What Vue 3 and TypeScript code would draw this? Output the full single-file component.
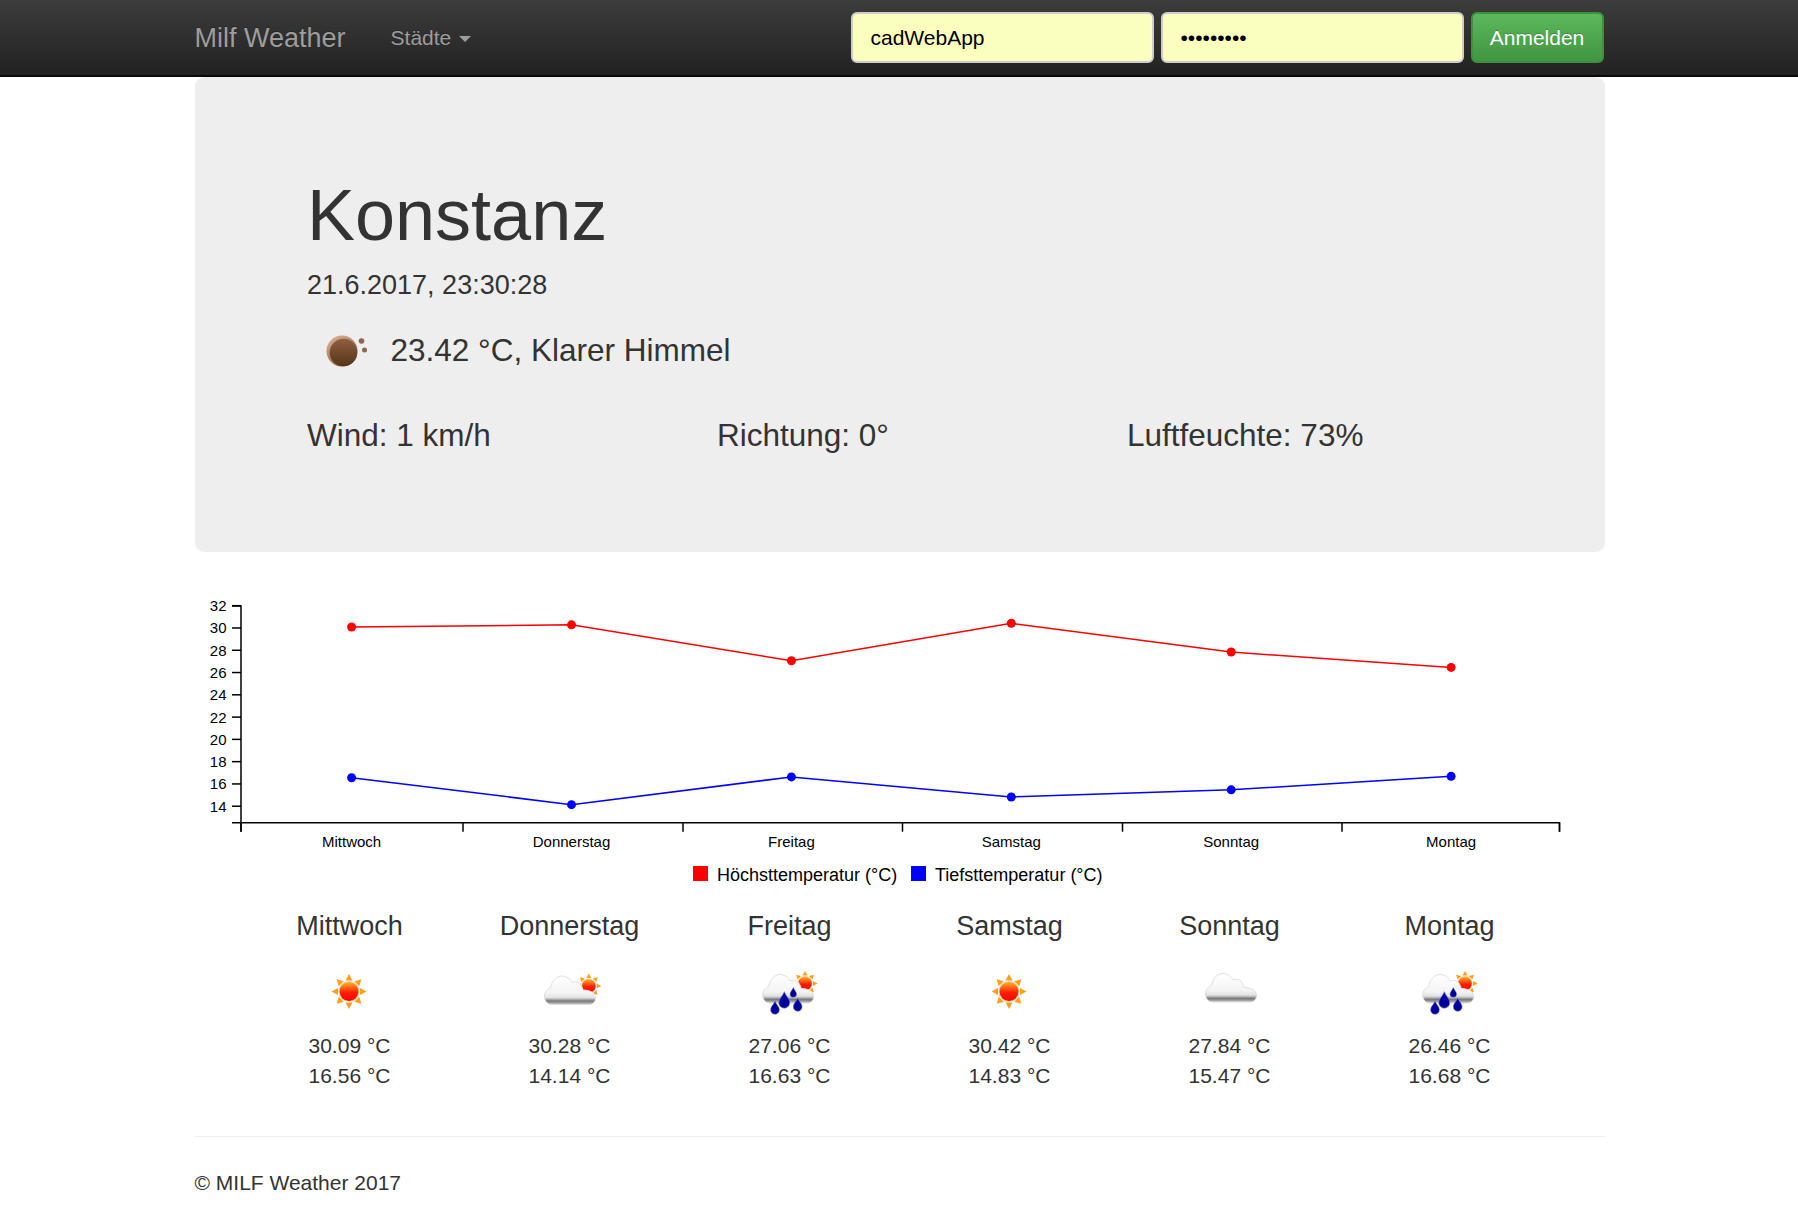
<template>
  <nav class="navbar">
    <div class="nav-inner">
      <a class="brand">Milf Weather</a>
      <a class="cities">Städte <span class="caret"></span></a>
      <form class="login" @submit.prevent>
        <input class="field" type="text" value="cadWebApp" />
        <input class="field" type="password" value="cadWebApp" />
        <button class="btn-login" type="submit">Anmelden</button>
      </form>
    </div>
  </nav>

  <main class="container">
    <section class="jumbotron">
      <h1>Konstanz</h1>
      <div class="date">21.6.2017, 23:30:28</div>
      <p class="current">
        <svg class="icon" viewBox="0 0 75 75" width="75" height="75">
          <g filter="url(#soft)">
            <circle cx="35" cy="38" r="15.5" fill="url(#moonRim)" />
            <circle cx="36.5" cy="39.5" r="13.8" fill="url(#moonBody)" />
            <circle cx="54.5" cy="28" r="2.8" fill="#8d6650" />
            <circle cx="57.5" cy="37" r="2.5" fill="#8d6650" />
          </g>
        </svg>
        <span>23.42 °C, Klarer Himmel</span>
      </p>
      <div class="stats">
        <div>Wind: 1 km/h</div>
        <div>Richtung: 0°</div>
        <div>Luftfeuchte: 73%</div>
      </div>
    </section>

    <svg class="chart" viewBox="0 0 1410 290" width="1410" height="290">
      <defs>
        <filter id="soft" x="-10%" y="-10%" width="120%" height="120%">
          <feGaussianBlur stdDeviation="0.55" />
        </filter>
        <linearGradient id="moonRim" x1="0" y1="0" x2="0.6" y2="1">
          <stop offset="0" stop-color="#e2b79c" />
          <stop offset="1" stop-color="#8a5c3e" />
        </linearGradient>
        <linearGradient id="moonBody" x1="0" y1="0" x2="0" y2="1">
          <stop offset="0" stop-color="#8f6040" />
          <stop offset="1" stop-color="#553419" />
        </linearGradient>
        <linearGradient id="sunBody" x1="0" y1="0" x2="0" y2="1">
          <stop offset="0" stop-color="#ffb030" />
          <stop offset="0.55" stop-color="#ff2000" />
          <stop offset="1" stop-color="#ff0000" />
        </linearGradient>
        <linearGradient id="cloudBody" x1="0" y1="0" x2="0" y2="1">
          <stop offset="0" stop-color="#ffffff" />
          <stop offset="0.6" stop-color="#f4f4f4" />
          <stop offset="0.76" stop-color="#e2e2e2" />
          <stop offset="0.88" stop-color="#787878" />
          <stop offset="1" stop-color="#c8c8c8" />
        </linearGradient>
        <symbol id="cloud" overflow="visible">
          <path
            d="M7 28.5C2.5 28.5 0 24.5 0 20.5 0 16 3 13 6 12 7 5 12 0 17.5 0 22 0 26 3 27.5 6.5 30 5 35 5.5 37 10 38 12 38.5 13.5 38.5 14 44 14 51 16 51 22 51 26 48 28.5 45 28.5Z"
            fill="url(#cloudBody)"
            stroke="#dedede"
            stroke-width="1"
          />
        </symbol>
        <symbol id="sun" overflow="visible">
          <g fill="#ff9f1f">
            <polygon
              v-for="angle in rays"
              :key="angle"
              points="-3.5,-11 3.5,-11 0,-17.5"
              :transform="`rotate(${angle})`"
            />
          </g>
          <circle r="10.5" fill="#ffd28a" />
          <circle r="9.4" fill="url(#sunBody)" />
        </symbol>
        <symbol id="smallSun" overflow="visible">
          <g fill="#ff9f1f">
            <polygon
              v-for="angle in rays"
              :key="angle"
              points="-2.5,-8 2.5,-8 0,-12.5"
              :transform="`rotate(${angle})`"
            />
          </g>
          <circle r="7.6" fill="#ffd28a" />
          <circle r="6.8" fill="url(#sunBody)" />
        </symbol>
        <path
          id="drop"
          d="M0 -1.7C.3 -.9 1 -.4 1 .3A1 1 0 1 1 -1 .3C-1 -.4 -.3 -.9 0 -1.7Z"
          fill="#00009c"
          stroke="#7f7fd0"
          stroke-width=".12"
        />
      </defs>

      <g class="axis">
        <path d="M37 9H46V225.7H37" />
        <path d="M46 234.7V225.7H1364.5V234.7" />
        <line v-for="tick in yTicks" :key="tick" x1="37" x2="46" :y1="yAt(tick)" :y2="yAt(tick)" />
        <line v-for="x in xTicks" :key="x" :x1="x" :x2="x" y1="225.7" y2="234.7" />
      </g>
      <text v-for="tick in yTicks" :key="tick" class="tick" x="31.5" :y="yAt(tick) + 5.5" text-anchor="end">{{ tick }}</text>
      <text v-for="(day, i) in days" :key="day.name" class="tick" :x="xAt(i)" y="250" text-anchor="middle">{{ day.name }}</text>

      <polyline class="series" stroke="#f00" :points="linePoints('high')" />
      <polyline class="series" stroke="#00f" :points="linePoints('low')" />
      <circle v-for="(day, i) in days" :key="day.name" :cx="xAt(i)" :cy="yAt(day.high)" r="4.5" fill="#f00" />
      <circle v-for="(day, i) in days" :key="day.name" :cx="xAt(i)" :cy="yAt(day.low)" r="4.5" fill="#00f" />

      <rect x="498" y="269" width="15" height="15" fill="#f00" />
      <text class="legend" x="522" y="284">Höchsttemperatur (°C)</text>
      <rect x="716" y="269" width="15" height="15" fill="#00f" />
      <text class="legend" x="740" y="284">Tiefsttemperatur (°C)</text>
    </svg>

    <section class="forecast">
      <div v-for="day in days" :key="day.name" class="day">
        <h4>{{ day.name }}</h4>
        <svg class="icon day-icon" viewBox="0 0 75 75" width="75" height="75">
          <g filter="url(#soft)">
            <use v-if="day.icon === 'sun'" href="#sun" x="37" y="37.5" />
            <template v-if="day.icon === 'cloudSun'">
              <use href="#smallSun" x="56.8" y="32" />
              <use href="#cloud" x="12.5" y="22" />
            </template>
            <use v-if="day.icon === 'cloud'" href="#cloud" x="13.5" y="19.5" />
            <template v-if="day.icon === 'rain'">
              <use href="#smallSun" x="53" y="29.5" />
              <use href="#cloud" x="10.7" y="20.5" />
              <use href="#drop" transform="translate(32.3 47) scale(5.5)" />
              <use href="#drop" transform="translate(23 54.5) scale(4.4)" />
              <use href="#drop" transform="translate(45.7 51.5) scale(4.4)" />
              <use href="#drop" transform="translate(41.3 39) scale(3.3)" />
            </template>
          </g>
        </svg>
        <div class="temps">
          <div>{{ day.high.toFixed(2) }} °C</div>
          <div>{{ day.low.toFixed(2) }} °C</div>
        </div>
      </div>
    </section>

    <hr />
    <footer>© MILF Weather 2017</footer>
  </main>
</template>

<script setup lang="ts">
type Day = {
  name: string,
  high: number,
  low: number,
  icon: "sun" | "cloudSun" | "cloud" | "rain"
};

const days: Day[] = [
  { name: "Mittwoch", high: 30.09, low: 16.56, icon: "sun" },
  { name: "Donnerstag", high: 30.28, low: 14.14, icon: "cloudSun" },
  { name: "Freitag", high: 27.06, low: 16.63, icon: "rain" },
  { name: "Samstag", high: 30.42, low: 14.83, icon: "sun" },
  { name: "Sonntag", high: 27.84, low: 15.47, icon: "cloud" },
  { name: "Montag", high: 26.46, low: 16.68, icon: "rain" }
];

const yTicks = [14, 16, 18, 20, 22, 24, 26, 28, 30, 32];
const xTicks = [46, 268, 488, 707.5, 927.5, 1147, 1364.5];
const rays = [0, 45, 90, 135, 180, 225, 270, 315];

function xAt(i: number) {
  return 156.6 + i * 219.9;
}

function yAt(value: number) {
  return 180.7 - (value - 16.56) * 11.14;
}

function linePoints(key: "high" | "low") {
  return days.map((day, i) => `${xAt(i)},${yAt(day[key])}`).join(" ");
}
</script>

<style>
body {
  background: #fff;
}
</style>

<style scoped>
.navbar {
  height: 75px;
  background: linear-gradient(to bottom, #3c3c3c, #222);
  border-bottom: 2px solid #080808;
  font-family: "Liberation Sans", Arial, sans-serif;
}

.nav-inner {
  width: 1410px;
  height: 75px;
  margin-left: 194.5px;
  display: flex;
  align-items: center;
}

.brand {
  padding-top: 2px;
  font-size: 27px;
  color: #9d9d9d;
  text-shadow: 0 -1px 0 rgba(0, 0, 0, .25);
}

.cities {
  margin-left: 45px;
  font-size: 21px;
  color: #9d9d9d;
  text-shadow: 0 -1px 0 rgba(0, 0, 0, .25);
}

.caret {
  display: inline-block;
  margin-left: 2px;
  vertical-align: middle;
  border-top: 6px solid #9d9d9d;
  border-left: 6px solid transparent;
  border-right: 6px solid transparent;
}

.login {
  margin-left: auto;
  display: flex;
  gap: 6.5px;
  margin-right: 1px;
}

.field {
  box-sizing: border-box;
  width: 303.5px;
  height: 51px;
  padding: 0 18px;
  background: #faffbd;
  border: 2px solid #ccc;
  border-radius: 6px;
  font-family: inherit;
  font-size: 21px;
  color: #000;
  outline: none;
}

.btn-login {
  box-sizing: border-box;
  width: 133px;
  height: 51px;
  padding: 0;
  background: linear-gradient(to bottom, #5cb85c, #419641);
  border: 2px solid #3e8f3e;
  border-radius: 6px;
  font-family: inherit;
  font-size: 21px;
  color: #fff;
  text-shadow: 0 -1px 0 rgba(0, 0, 0, .2);
}

.container {
  width: 1410px;
  margin-left: 194.5px;
  color: #333;
  font-family: "Liberation Sans", Arial, sans-serif;
  font-size: 21px;
  line-height: 30px;
}

.jumbotron {
  box-sizing: border-box;
  height: 475px;
  padding: 99px 67.5px 0 112.5px;
  background: #eee;
  border-radius: 9px;
}

h1 {
  margin: 0;
  font-size: 72px;
  font-weight: 400;
  line-height: 79px;
}

.date {
  margin-top: 12px;
  font-size: 27px;
  line-height: 36px;
}

.current {
  display: flex;
  align-items: center;
  margin: 10px 0 0;
  font-size: 31.5px;
  line-height: 45px;
}

.current span {
  margin-left: 8.5px;
}

.icon {
  display: block;
}

.stats {
  display: grid;
  grid-template-columns: repeat(3, 410px);
  margin-top: 24.5px;
  font-size: 31.5px;
  line-height: 45px;
}

.chart {
  display: block;
  margin-top: 45px;
}

.axis path,
.axis line {
  fill: none;
  stroke: #000;
  stroke-width: 1.5;
}

.tick {
  font-size: 15px;
  fill: #000;
}

.legend {
  font-size: 18px;
  fill: #000;
}

.series {
  fill: none;
  stroke-width: 1.5;
}

.forecast {
  display: grid;
  grid-template-columns: repeat(6, 220px);
  padding: 0 45px;
  text-align: center;
}

h4 {
  margin: 24px 0 0;
  font-size: 27px;
  font-weight: 400;
  line-height: 30px;
}

.day-icon {
  margin: 13px auto 0;
}

.temps {
  margin-top: 1.5px;
}

hr {
  margin: 45.5px 0 0;
  border: 0;
  border-top: 1.5px solid #eee;
}

footer {
  margin-top: 30.5px;
}
</style>
